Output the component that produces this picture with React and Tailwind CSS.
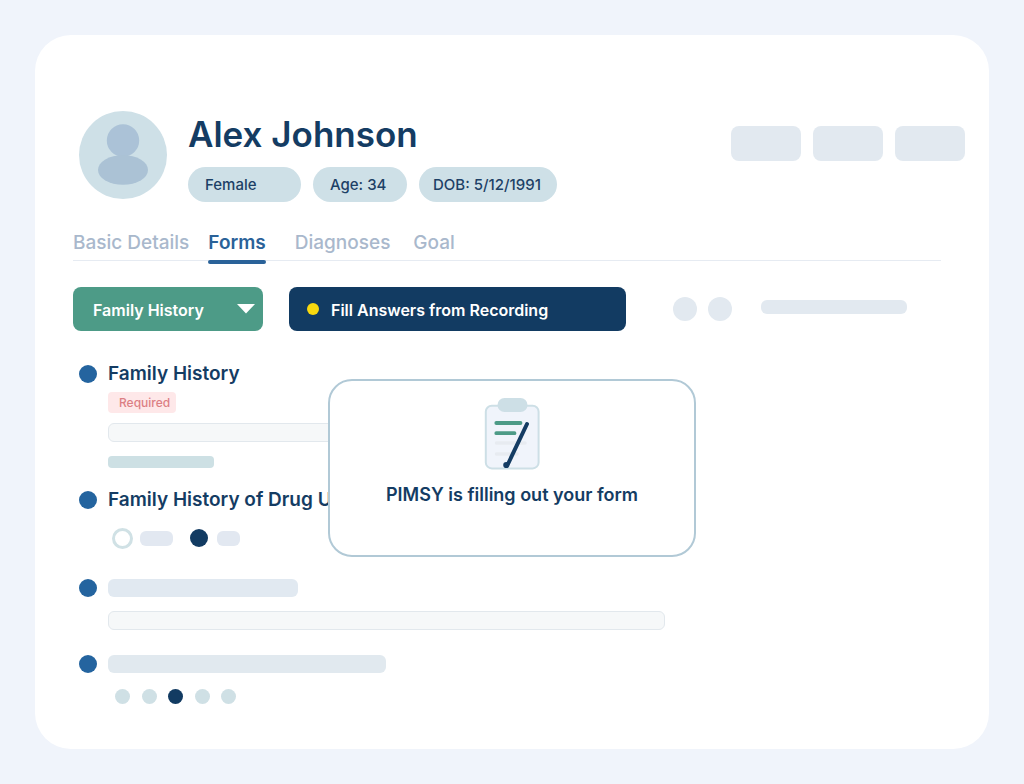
import React, { useState } from "react";

const TABS = [
  { name: "Basic Details", className: "" },
  { name: "Forms", className: "mr-[10px]" },
  { name: "Diagnoses", className: "mr-1" },
  { name: "Goal", className: "" },
];

const Avatar = () => (
  <svg viewBox="0 0 88 88" className="w-22 h-22 shrink-0" aria-hidden="true">
    <circle cx="44" cy="44" r="44" fill="#cee0e7" />
    <circle cx="44" cy="29.5" r="16.2" fill="#abc2d7" />
    <ellipse cx="44" cy="59" rx="25" ry="14.8" fill="#abc2d5" />
  </svg>
);

const ClipboardIcon = () => (
  <svg viewBox="0 0 56 74" className="w-14 h-[74px]" aria-hidden="true">
    <rect x="1.8" y="8.8" width="52.800" height="62.600" rx="6" fill="#f0f4fb" stroke="#cddfe6" strokeWidth="2" />
    <rect x="13.500" y="1" width="30" height="14" rx="7" fill="#cddfe6" />
    <g strokeLinecap="round" fill="none">
      <path d="M12.500 46H41M12.500 57H33" stroke="#e7ebf1" strokeWidth="3.500" />
      <path d="M12.300 26H36.500M12.300 36.200H30.500" stroke="#4d9b87" strokeWidth="3.800" />
      <path d="M43 27L24 67" stroke="#143c63" strokeWidth="4" />
    </g>
    <circle cx="22.300" cy="68" r="3.100" fill="#143c63" />
  </svg>
);

const Pill = ({ children, className }) => (
  <span className={`h-[35px] pt-px rounded-full bg-[#cee0e7] flex items-center text-[15px] font-medium text-[#1d4066] ${className}`}>
    {children}
  </span>
);

// One question: blue bullet on the left, label and answer on the right
const Question = ({ label, children, className }) => (
  <li className={`flex gap-[11px] ${className}`}>
    <span className="w-[18px] h-[18px] mt-[5px] rounded-full bg-[#24649f] shrink-0" />
    <div className="flex-1 min-w-0">
      <div className="h-7 flex items-center">{label}</div>
      {children}
    </div>
  </li>
);

const QuestionTitle = ({ children }) => (
  <h2 className="text-[19px] leading-7 font-semibold text-[#143c63] whitespace-nowrap">{children}</h2>
);

const AnswerInput = ({ label, className }) => (
  <input
    type="text"
    aria-label={label}
    className={`block w-full max-w-[557px] h-[19px] px-2 text-xs rounded-md border border-[#e2e8ed] bg-[#f6f8f9] outline-none ${className}`}
  />
);

const App = () => {
  const [activeTab, setActiveTab] = useState("Forms");
  const [usage, setUsage] = useState("no");
  const [rating, setRating] = useState(3);

  return (
    <div className="min-h-screen flex bg-[#f0f4fb] p-[35px] font-['Inter',sans-serif]">
      <main className="relative flex-1 min-w-0 bg-white rounded-[36px] pt-[76px] pb-10 pl-[38px] pr-6">
        {/* Patient header */}
        <header className="flex items-start pl-[6px]">
          <Avatar />
          <div className="ml-[21px] flex-1">
            <h1 className="text-[35px] leading-[46px] font-semibold text-[#143c63]">Alex Johnson</h1>
            <div className="mt-[10px] flex gap-3">
              <Pill className="w-[113px] pl-[17px]">Female</Pill>
              <Pill className="w-[94px] pl-[17px]">Age: 34</Pill>
              <Pill className="w-[138px] pl-[14px]">DOB: 5/12/1991</Pill>
            </div>
          </div>
          <div className="mt-[15px] flex gap-3">
            <button type="button" aria-label="Message" className="w-[70px] h-[35px] rounded-lg bg-[#e2e9f0]" />
            <button type="button" aria-label="Schedule" className="w-[70px] h-[35px] rounded-lg bg-[#e2e9f0]" />
            <button type="button" aria-label="More" className="w-[70px] h-[35px] rounded-lg bg-[#e2e9f0]" />
          </div>
        </header>

        <div className="mr-6">
          {/* Tabs */}
          <nav className="mt-[27px] flex gap-[19px] border-b border-[#e6ebf2]">
            {TABS.map((tab) => (
              <a
                key={tab.name}
                href="#"
                onClick={() => setActiveTab(tab.name)}
                className={`relative pb-[3px] text-[19px] leading-7 ${tab.className} ${
                  activeTab === tab.name ? "font-semibold text-[#2a6299]" : "font-medium text-[#a9b8cc]"
                }`}
              >
                {tab.name}
                {activeTab === tab.name && (
                  <span className="absolute left-0 top-[31px] w-full h-1 rounded-sm bg-[#2a6299]" />
                )}
              </a>
            ))}
          </nav>

          {/* Toolbar */}
          <div className="mt-[26px] flex items-center">
            <div className="relative">
              <select
                aria-label="Form"
                className="appearance-none w-[190px] h-11 pl-5 pt-[2px] rounded-lg bg-[#4d9b87] text-white text-base font-semibold outline-none"
              >
                <option>Family History</option>
              </select>
              <svg viewBox="0 0 18 10" className="absolute right-2 top-[17px] w-[18px] h-[10px] pointer-events-none" aria-hidden="true">
                <path d="M0 0H18L9 9.500Z" fill="#fff" />
              </svg>
            </div>
            <button
              type="button"
              className="ml-[26px] w-[337px] h-11 pl-[18px] flex items-center gap-3 rounded-lg bg-[#123b62] text-white text-base font-semibold"
            >
              <span className="w-3 h-3 rounded-full bg-[#f8d90f]" />
              <span className="pt-[2px]">Fill Answers from Recording</span>
            </button>
            <button type="button" aria-label="Print" className="ml-[47px] w-6 h-6 rounded-full bg-[#e2e9f0]" />
            <button type="button" aria-label="Share" className="ml-[11px] w-6 h-6 rounded-full bg-[#e2e9f0]" />
            <span className="ml-[29px] mb-1 w-[146px] h-[14px] rounded-md bg-[#e2e9f0]" />
          </div>

          {/* Questions */}
          <ul className="mt-[29px] pl-[6px]">
            <Question label={<QuestionTitle>Family History</QuestionTitle>} className="h-[126px]">
              <span className="mt-1 w-[68px] h-[21px] pl-[11px] flex items-center rounded-sm bg-[#fee8e9] text-xs font-medium text-[#dc7f84]">
                Required
              </span>
              <AnswerInput label="Family History" className="mt-[10px]" />
              <div className="mt-[14px] w-[106px] h-3 rounded-sm bg-[#cde0e4]" />
            </Question>

            <Question label={<QuestionTitle>Family History of Drug Use</QuestionTitle>} className="h-[88px]">
              <div className="mt-[14px] ml-1 h-5 flex items-center">
                <input
                  type="radio"
                  name="usage"
                  aria-label="Yes"
                  checked={usage === "yes"}
                  onChange={() => setUsage("yes")}
                  className="appearance-none w-[21px] h-[21px] rounded-full border-3 border-[#d0e1e5] checked:bg-[#123b62]"
                />
                <span className="ml-[7px] w-[33px] h-[15px] rounded-md bg-[#e2e8f1]" />
                <input
                  type="radio"
                  name="usage"
                  aria-label="No"
                  checked={usage === "no"}
                  onChange={() => setUsage("no")}
                  className="appearance-none ml-[17px] w-[18px] h-[18px] rounded-full bg-[#d0e1e5] checked:bg-[#123b62]"
                />
                <span className="ml-[9px] w-[23px] h-[15px] rounded-md bg-[#e2e8f1]" />
              </div>
            </Question>

            <Question label={<div className="w-[190px] h-[18px] rounded-md bg-[#e1e9f1]" />} className="h-[76px]">
              <AnswerInput label="Details" className="mt-[9px]" />
            </Question>

            <Question label={<div className="w-[278px] h-[18px] rounded-md bg-[#e1e9ef]" />} className="h-[54px]">
              <div className="mt-[11px] ml-[7px] w-[121px] flex justify-between">
                {[1, 2, 3, 4, 5].map((value) => (
                  <input
                    key={value}
                    type="radio"
                    name="rating"
                    aria-label={`Rating ${value}`}
                    checked={rating === value}
                    onChange={() => setRating(value)}
                    className="appearance-none w-[15px] h-[15px] rounded-full bg-[#cfe0e5] checked:bg-[#123b62]"
                  />
                ))}
              </div>
            </Question>
          </ul>
        </div>

        {/* Progress popup */}
        <div
          role="dialog"
          aria-label="Form progress"
          className="absolute left-1/2 top-[344px] -translate-x-1/2 w-[368px] h-[178px] pt-4 flex flex-col items-center rounded-3xl border-2 border-[#b1c9d6] bg-white"
        >
          <ClipboardIcon />
          <p className="mt-[10px] text-lg leading-7 font-semibold text-[#143c63]">PIMSY is filling out your form</p>
        </div>
      </main>
    </div>
  );
};

export default App;
